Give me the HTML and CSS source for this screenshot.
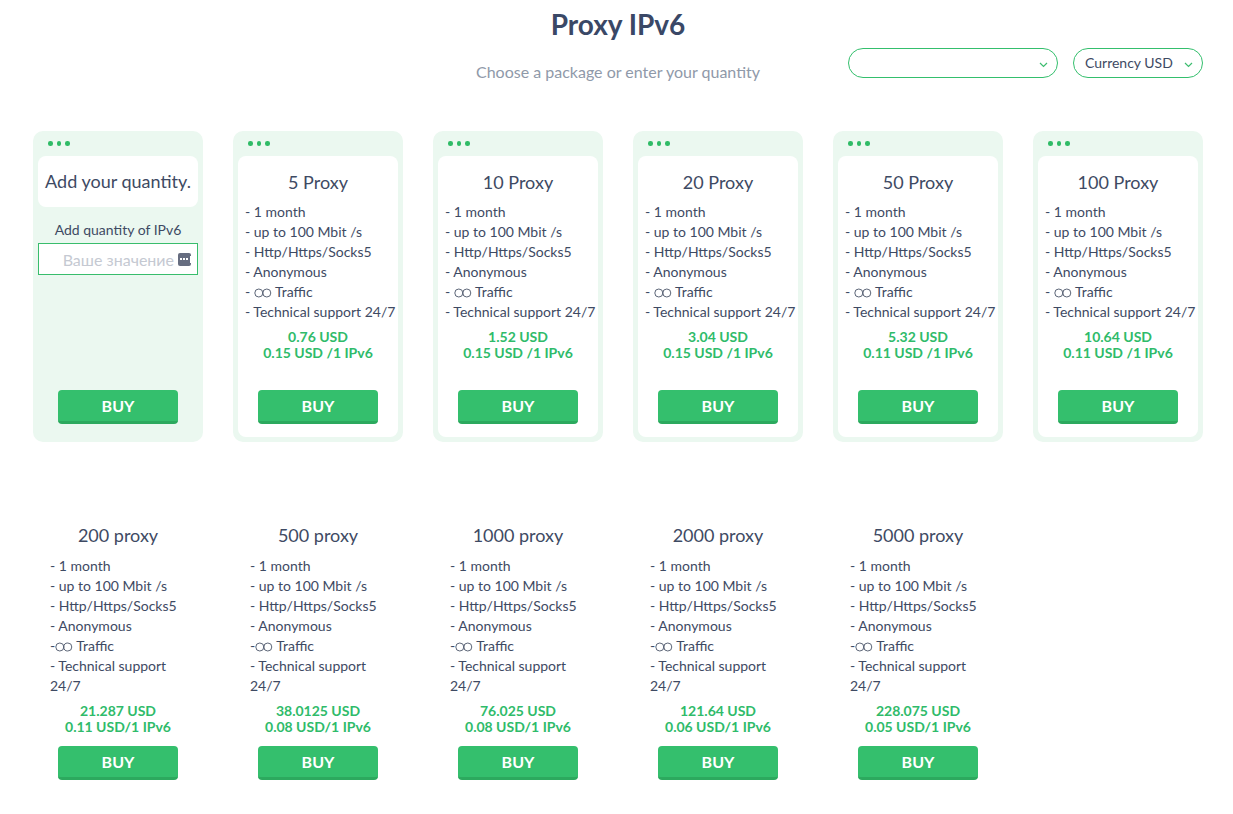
FILE: index.html
```html
<!DOCTYPE html>
<html lang="en">
<head>
    <meta charset="UTF-8">
    <meta name="viewport" content="width=device-width, initial-scale=1.0">
    <title>Proxy IPv6</title>
    <link rel="stylesheet" href="styles.css">
</head>
<body>
    <div class="page">
        <h1>Proxy IPv6</h1>

        <div class="top-row">
            <div></div>
            <p class="subtitle">Choose a package or enter your quantity</p>
            <div class="selects">
                <div class="select select-wide">
                    <span></span>
                    <svg class="chevron" width="9" height="6" viewBox="0 0 9 6"><path d="M1 1l3.5 3.5L8 1" fill="none" stroke="#3dbd70" stroke-width="1.2"/></svg>
                </div>
                <div class="select select-cur">
                    <span>Currency USD</span>
                    <svg class="chevron" width="9" height="6" viewBox="0 0 9 6"><path d="M1 1l3.5 3.5L8 1" fill="none" stroke="#3dbd70" stroke-width="1.2"/></svg>
                </div>
            </div>
        </div>

        <!-- packages with frame -->
        <div class="cards">
            <div class="card">
                <div class="dots"><i></i><i></i><i></i></div>
                <div class="card-body custom">
                    <div class="custom-head">Add your quantity.</div>
                    <div class="custom-label">Add quantity of IPv6</div>
                    <div class="qty-input">
                        <span class="placeholder">Ваше значение</span>
                        <span class="qty-icon"><i></i><i></i><i></i><b></b></span>
                    </div>
                    <button class="buy">BUY</button>
                </div>
            </div>

            <div class="card">
                <div class="dots"><i></i><i></i><i></i></div>
                <div class="card-body">
                    <div class="title">5 Proxy</div>
                    <ul class="features">
                        <li>- 1 month</li>
                        <li>- up to 100 Mbit /s</li>
                        <li>- Http/Https/Socks5</li>
                        <li>- Anonymous</li>
                        <li>- <svg class="inf" width="18" height="10" viewBox="0 0 18 10"><circle cx="4.8" cy="5" r="4" fill="none" stroke="#4a5468" stroke-width="0.9"/><circle cx="12.8" cy="5" r="4" fill="none" stroke="#4a5468" stroke-width="0.9"/></svg> Traffic</li>
                        <li>- Technical support 24/7</li>
                    </ul>
                    <div class="price">0.76 USD<br>0.15 USD /1 IPv6</div>
                    <button class="buy">BUY</button>
                </div>
            </div>

            <div class="card">
                <div class="dots"><i></i><i></i><i></i></div>
                <div class="card-body">
                    <div class="title">10 Proxy</div>
                    <ul class="features">
                        <li>- 1 month</li>
                        <li>- up to 100 Mbit /s</li>
                        <li>- Http/Https/Socks5</li>
                        <li>- Anonymous</li>
                        <li>- <svg class="inf" width="18" height="10" viewBox="0 0 18 10"><circle cx="4.8" cy="5" r="4" fill="none" stroke="#4a5468" stroke-width="0.9"/><circle cx="12.8" cy="5" r="4" fill="none" stroke="#4a5468" stroke-width="0.9"/></svg> Traffic</li>
                        <li>- Technical support 24/7</li>
                    </ul>
                    <div class="price">1.52 USD<br>0.15 USD /1 IPv6</div>
                    <button class="buy">BUY</button>
                </div>
            </div>

            <div class="card">
                <div class="dots"><i></i><i></i><i></i></div>
                <div class="card-body">
                    <div class="title">20 Proxy</div>
                    <ul class="features">
                        <li>- 1 month</li>
                        <li>- up to 100 Mbit /s</li>
                        <li>- Http/Https/Socks5</li>
                        <li>- Anonymous</li>
                        <li>- <svg class="inf" width="18" height="10" viewBox="0 0 18 10"><circle cx="4.8" cy="5" r="4" fill="none" stroke="#4a5468" stroke-width="0.9"/><circle cx="12.8" cy="5" r="4" fill="none" stroke="#4a5468" stroke-width="0.9"/></svg> Traffic</li>
                        <li>- Technical support 24/7</li>
                    </ul>
                    <div class="price">3.04 USD<br>0.15 USD /1 IPv6</div>
                    <button class="buy">BUY</button>
                </div>
            </div>

            <div class="card">
                <div class="dots"><i></i><i></i><i></i></div>
                <div class="card-body">
                    <div class="title">50 Proxy</div>
                    <ul class="features">
                        <li>- 1 month</li>
                        <li>- up to 100 Mbit /s</li>
                        <li>- Http/Https/Socks5</li>
                        <li>- Anonymous</li>
                        <li>- <svg class="inf" width="18" height="10" viewBox="0 0 18 10"><circle cx="4.8" cy="5" r="4" fill="none" stroke="#4a5468" stroke-width="0.9"/><circle cx="12.8" cy="5" r="4" fill="none" stroke="#4a5468" stroke-width="0.9"/></svg> Traffic</li>
                        <li>- Technical support 24/7</li>
                    </ul>
                    <div class="price">5.32 USD<br>0.11 USD /1 IPv6</div>
                    <button class="buy">BUY</button>
                </div>
            </div>

            <div class="card">
                <div class="dots"><i></i><i></i><i></i></div>
                <div class="card-body">
                    <div class="title">100 Proxy</div>
                    <ul class="features">
                        <li>- 1 month</li>
                        <li>- up to 100 Mbit /s</li>
                        <li>- Http/Https/Socks5</li>
                        <li>- Anonymous</li>
                        <li>- <svg class="inf" width="18" height="10" viewBox="0 0 18 10"><circle cx="4.8" cy="5" r="4" fill="none" stroke="#4a5468" stroke-width="0.9"/><circle cx="12.8" cy="5" r="4" fill="none" stroke="#4a5468" stroke-width="0.9"/></svg> Traffic</li>
                        <li>- Technical support 24/7</li>
                    </ul>
                    <div class="price">10.64 USD<br>0.11 USD /1 IPv6</div>
                    <button class="buy">BUY</button>
                </div>
            </div>
        </div>

        <!-- big packages -->
        <div class="cards plain-row">
            <div class="plain">
                <div class="title">200 proxy</div>
                <ul class="features">
                    <li>- 1 month</li>
                    <li>- up to 100 Mbit /s</li>
                    <li>- Http/Https/Socks5</li>
                    <li>- Anonymous</li>
                    <li>-<svg class="inf" width="18" height="10" viewBox="0 0 18 10"><circle cx="4.8" cy="5" r="4" fill="none" stroke="#4a5468" stroke-width="0.9"/><circle cx="12.8" cy="5" r="4" fill="none" stroke="#4a5468" stroke-width="0.9"/></svg> Traffic</li>
                    <li>- Technical support 24/7</li>
                </ul>
                <div class="price">21.287 USD<br>0.11 USD/1 IPv6</div>
                <button class="buy">BUY</button>
            </div>

            <div class="plain">
                <div class="title">500 proxy</div>
                <ul class="features">
                    <li>- 1 month</li>
                    <li>- up to 100 Mbit /s</li>
                    <li>- Http/Https/Socks5</li>
                    <li>- Anonymous</li>
                    <li>-<svg class="inf" width="18" height="10" viewBox="0 0 18 10"><circle cx="4.8" cy="5" r="4" fill="none" stroke="#4a5468" stroke-width="0.9"/><circle cx="12.8" cy="5" r="4" fill="none" stroke="#4a5468" stroke-width="0.9"/></svg> Traffic</li>
                    <li>- Technical support 24/7</li>
                </ul>
                <div class="price">38.0125 USD<br>0.08 USD/1 IPv6</div>
                <button class="buy">BUY</button>
            </div>

            <div class="plain">
                <div class="title">1000 proxy</div>
                <ul class="features">
                    <li>- 1 month</li>
                    <li>- up to 100 Mbit /s</li>
                    <li>- Http/Https/Socks5</li>
                    <li>- Anonymous</li>
                    <li>-<svg class="inf" width="18" height="10" viewBox="0 0 18 10"><circle cx="4.8" cy="5" r="4" fill="none" stroke="#4a5468" stroke-width="0.9"/><circle cx="12.8" cy="5" r="4" fill="none" stroke="#4a5468" stroke-width="0.9"/></svg> Traffic</li>
                    <li>- Technical support 24/7</li>
                </ul>
                <div class="price">76.025 USD<br>0.08 USD/1 IPv6</div>
                <button class="buy">BUY</button>
            </div>

            <div class="plain">
                <div class="title">2000 proxy</div>
                <ul class="features">
                    <li>- 1 month</li>
                    <li>- up to 100 Mbit /s</li>
                    <li>- Http/Https/Socks5</li>
                    <li>- Anonymous</li>
                    <li>-<svg class="inf" width="18" height="10" viewBox="0 0 18 10"><circle cx="4.8" cy="5" r="4" fill="none" stroke="#4a5468" stroke-width="0.9"/><circle cx="12.8" cy="5" r="4" fill="none" stroke="#4a5468" stroke-width="0.9"/></svg> Traffic</li>
                    <li>- Technical support 24/7</li>
                </ul>
                <div class="price">121.64 USD<br>0.06 USD/1 IPv6</div>
                <button class="buy">BUY</button>
            </div>

            <div class="plain">
                <div class="title">5000 proxy</div>
                <ul class="features">
                    <li>- 1 month</li>
                    <li>- up to 100 Mbit /s</li>
                    <li>- Http/Https/Socks5</li>
                    <li>- Anonymous</li>
                    <li>-<svg class="inf" width="18" height="10" viewBox="0 0 18 10"><circle cx="4.8" cy="5" r="4" fill="none" stroke="#4a5468" stroke-width="0.9"/><circle cx="12.8" cy="5" r="4" fill="none" stroke="#4a5468" stroke-width="0.9"/></svg> Traffic</li>
                    <li>- Technical support 24/7</li>
                </ul>
                <div class="price">228.075 USD<br>0.05 USD/1 IPv6</div>
                <button class="buy">BUY</button>
            </div>
        </div>
    </div>
</body>
</html>
```

FILE: styles.css
```css
body {
    font-family: 'Lato', 'Liberation Sans', sans-serif;
    background-color: #fff;
    color: #3e4a63;
    margin: 0;
    padding: 0;
}

.page {
    width: 1170px;
    margin-left: 33px;
}

h1 {
    margin: 0;
    padding-top: 7px;
    font-size: 28px;
    line-height: 34px;
    font-weight: 700;
    text-align: center;
    color: #3a4866;
}

.top-row {
    display: grid;
    grid-template-columns: 1fr auto 1fr;
    align-items: start;
}

.subtitle {
    margin: 21px 0 0;
    font-size: 16px;
    line-height: 20px;
    color: #8f99a9;
}

.selects {
    display: flex;
    justify-content: flex-end;
    gap: 15px;
    margin-top: 7px;
}

.select {
    height: 30px;
    box-sizing: border-box;
    border: 1px solid #34bf6d;
    border-radius: 15px;
    display: flex;
    align-items: center;
    justify-content: space-between;
    padding: 0 9px 1px 11px;
    font-size: 14px;
    color: #3e4a63;
}

.select-wide {
    width: 210px;
}

.select-cur {
    width: 130px;
}

.chevron {
    margin-top: 4px;
}

.cards {
    display: grid;
    grid-template-columns: repeat(6, 170px);
    gap: 30px;
    margin-top: 49px;
}

.card {
    height: 311px;
    background-color: #ebf8f0;
    border-radius: 10px;
    padding: 0 5px 5px;
    box-sizing: border-box;
    display: flex;
    flex-direction: column;
}

.dots {
    height: 25px;
    display: flex;
    align-items: center;
    gap: 4px;
    padding-left: 10px;
}

.dots i {
    width: 4.5px;
    height: 4.5px;
    border-radius: 50%;
    background-color: #2fbb66;
}

.card-body {
    flex: 1;
    background-color: #fff;
    border-radius: 8px;
    padding: 14px 0 13px;
    display: flex;
    flex-direction: column;
}

.card-body .features {
    padding-left: 7px;
}

.title {
    font-size: 18px;
    line-height: 24px;
    text-align: center;
}

.features {
    list-style: none;
    margin: 8px 0 0;
    padding: 0;
    font-size: 14px;
    line-height: 20px;
}

.inf {
    vertical-align: -1px;
}

.price {
    margin-top: 7px;
    font-size: 14px;
    line-height: 16px;
    font-weight: 700;
    color: #2fbb6a;
    text-align: center;
}

.buy {
    display: block;
    width: 120px;
    height: 34px;
    margin: auto auto 0;
    background-color: #34bf6d;
    border: none;
    border-bottom: 3px solid #2ca95e;
    border-radius: 4px;
    color: #fff;
    font-family: inherit;
    font-size: 16px;
    font-weight: 700;
    padding: 0;
    cursor: pointer;
}

/* first card: own quantity */
.card-body.custom {
    background-color: transparent;
    padding: 0 0 13px;
}

.custom-head {
    background-color: #fff;
    border-radius: 8px;
    height: 51px;
    line-height: 51px;
    font-size: 18px;
    text-align: center;
}

.custom-label {
    margin-top: 13px;
    font-size: 14px;
    line-height: 20px;
    text-align: center;
}

.qty-input {
    margin-top: 3px;
    height: 32px;
    box-sizing: border-box;
    background-color: #fff;
    border: 1px solid #38bd6c;
    display: flex;
    align-items: center;
    justify-content: flex-end;
    gap: 4px;
    padding-right: 6px;
}

.placeholder {
    font-size: 16px;
    color: #c5c9d2;
}

.qty-icon {
    width: 13px;
    height: 13px;
    border-radius: 2px;
    background-color: #666d80;
    display: flex;
    align-items: center;
    gap: 1px;
    padding-left: 2px;
    box-sizing: border-box;
}

.qty-icon i {
    width: 2px;
    height: 2px;
    background-color: #fff;
}

.qty-icon b {
    width: 1px;
    height: 7px;
    margin-left: 1px;
    background-color: #fff;
}

/* second row, no frame */
.plain-row {
    margin-top: 82px;
}

.plain {
    padding: 0 17px;
    display: flex;
    flex-direction: column;
}

.plain .title {
    margin-top: -1px;
}

.plain .features {
    margin-top: 9px;
}

.plain .price {
    margin-bottom: 11px;
}

.plain .buy {
    margin-top: 0;
}
```
